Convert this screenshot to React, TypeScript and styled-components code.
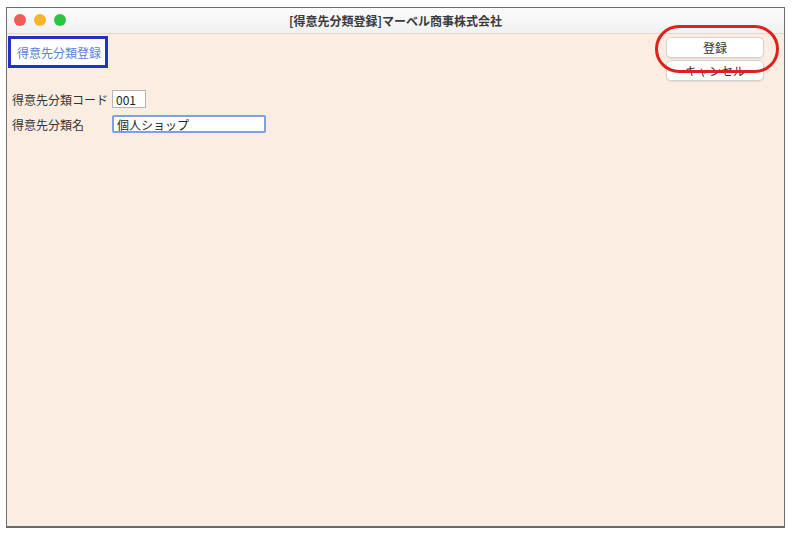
import styled, { createGlobalStyle } from "styled-components"

const GlobalStyle = createGlobalStyle`
    html, body {
        margin: 0;
        padding: 0;
        background: #ffffff;
        font-family: "Noto Sans CJK JP", "Noto Sans", sans-serif;
    }
`

const Pagina = styled.div`
    width: 798px;
    height: 538px;
    padding: 7px 0 0 6px;
    box-sizing: border-box;
`

const Janela = styled.div`
    width: 779px;
    height: 521px;
    box-sizing: border-box;
    border: 1px solid #6e6e6e;
    border-bottom: 2px solid #6a6a6a;
    display: flex;
    flex-direction: column;
    background: #fcede2;
`

const BarraTitulo = styled.div`
    height: 25px;
    flex-shrink: 0;
    position: relative;
    display: flex;
    align-items: center;
    justify-content: center;
    background: linear-gradient(#fbfbfb, #f1f1f1);
    border-bottom: 1px solid #e2d8d0;
    font-size: 12px;
    font-weight: bold;
    color: #3a3a3a;
`

const Semaforos = styled.div`
    position: absolute;
    left: 7px;
    top: 6px;
    display: flex;
    gap: 8px;
`

const Luz = styled.span<{ cor: string }>`
    width: 12px;
    height: 12px;
    border-radius: 50%;
    background: ${(p) => p.cor};
`

const Conteudo = styled.div`
    flex: 1;
    position: relative;
    padding: 2px 0 0 1px;
`

const Cabecalho = styled.div`
    display: flex;
    justify-content: space-between;
    align-items: flex-start;
    padding-right: 20px;
`

const Etiqueta = styled.div`
    width: 100px;
    height: 32px;
    box-sizing: border-box;
    border: 3px solid #2233c4;
    background: #ffffff;
    color: #5b7ed6;
    font-size: 12px;
    display: flex;
    align-items: center;
    padding-left: 6px;
`

const Botoes = styled.div`
    display: flex;
    flex-direction: column;
    gap: 2px;
    padding-top: 1px;
`

const Botao = styled.button`
    width: 98px;
    height: 21px;
    border: 1px solid #d8d2cc;
    border-radius: 5px;
    background: #ffffff;
    box-shadow: 0 1px 1px rgba(0, 0, 0, 0.08);
    font-family: inherit;
    font-size: 12px;
    color: #333333;
    padding: 0;
`

const Formulario = styled.div`
    display: flex;
    flex-direction: column;
    gap: 7px;
    padding: 9px 0 0 4px;
`

const Linha = styled.div`
    display: flex;
    align-items: center;
    height: 18px;
`

const Rotulo = styled.span`
    width: 100px;
    font-size: 12px;
    color: #333333;
    white-space: nowrap;
`

const Campo = styled.input<{ largura: number; foco?: boolean }>`
    width: ${(p) => p.largura}px;
    height: 18px;
    box-sizing: border-box;
    font-family: inherit;
    font-size: 12px;
    color: #222222;
    background: #ffffff;
    padding: 0 3px;
    outline: none;
    border: ${(p) => (p.foco ? "2px solid #7f9ee6" : "1px solid #b9b4b0")};
    border-radius: ${(p) => (p.foco ? "2px" : "0")};
`

const Destaque = styled.div`
    position: absolute;
    left: 648px;
    top: -9px;
    width: 124px;
    height: 48px;
    box-sizing: border-box;
    border: 3px solid #e0201c;
    border-radius: 24px;
    pointer-events: none;
`

export default function App() {
    return (
        <Pagina>
            <GlobalStyle />
            <Janela>
                <BarraTitulo>
                    <Semaforos>
                        <Luz cor="#f25a55" />
                        <Luz cor="#f6b52c" />
                        <Luz cor="#2dc43f" />
                    </Semaforos>
                    [得意先分類登録]マーベル商事株式会社
                </BarraTitulo>
                <Conteudo>
                    <Cabecalho>
                        <Etiqueta>得意先分類登録</Etiqueta>
                        <Botoes>
                            <Botao>登録</Botao>
                            <Botao>キャンセル</Botao>
                        </Botoes>
                    </Cabecalho>
                    <Formulario>
                        <Linha>
                            <Rotulo>得意先分類コード</Rotulo>
                            <Campo largura={34} defaultValue="001" />
                        </Linha>
                        <Linha>
                            <Rotulo>得意先分類名</Rotulo>
                            <Campo largura={154} foco defaultValue="個人ショップ" />
                        </Linha>
                    </Formulario>
                    <Destaque />
                </Conteudo>
            </Janela>
        </Pagina>
    )
}
